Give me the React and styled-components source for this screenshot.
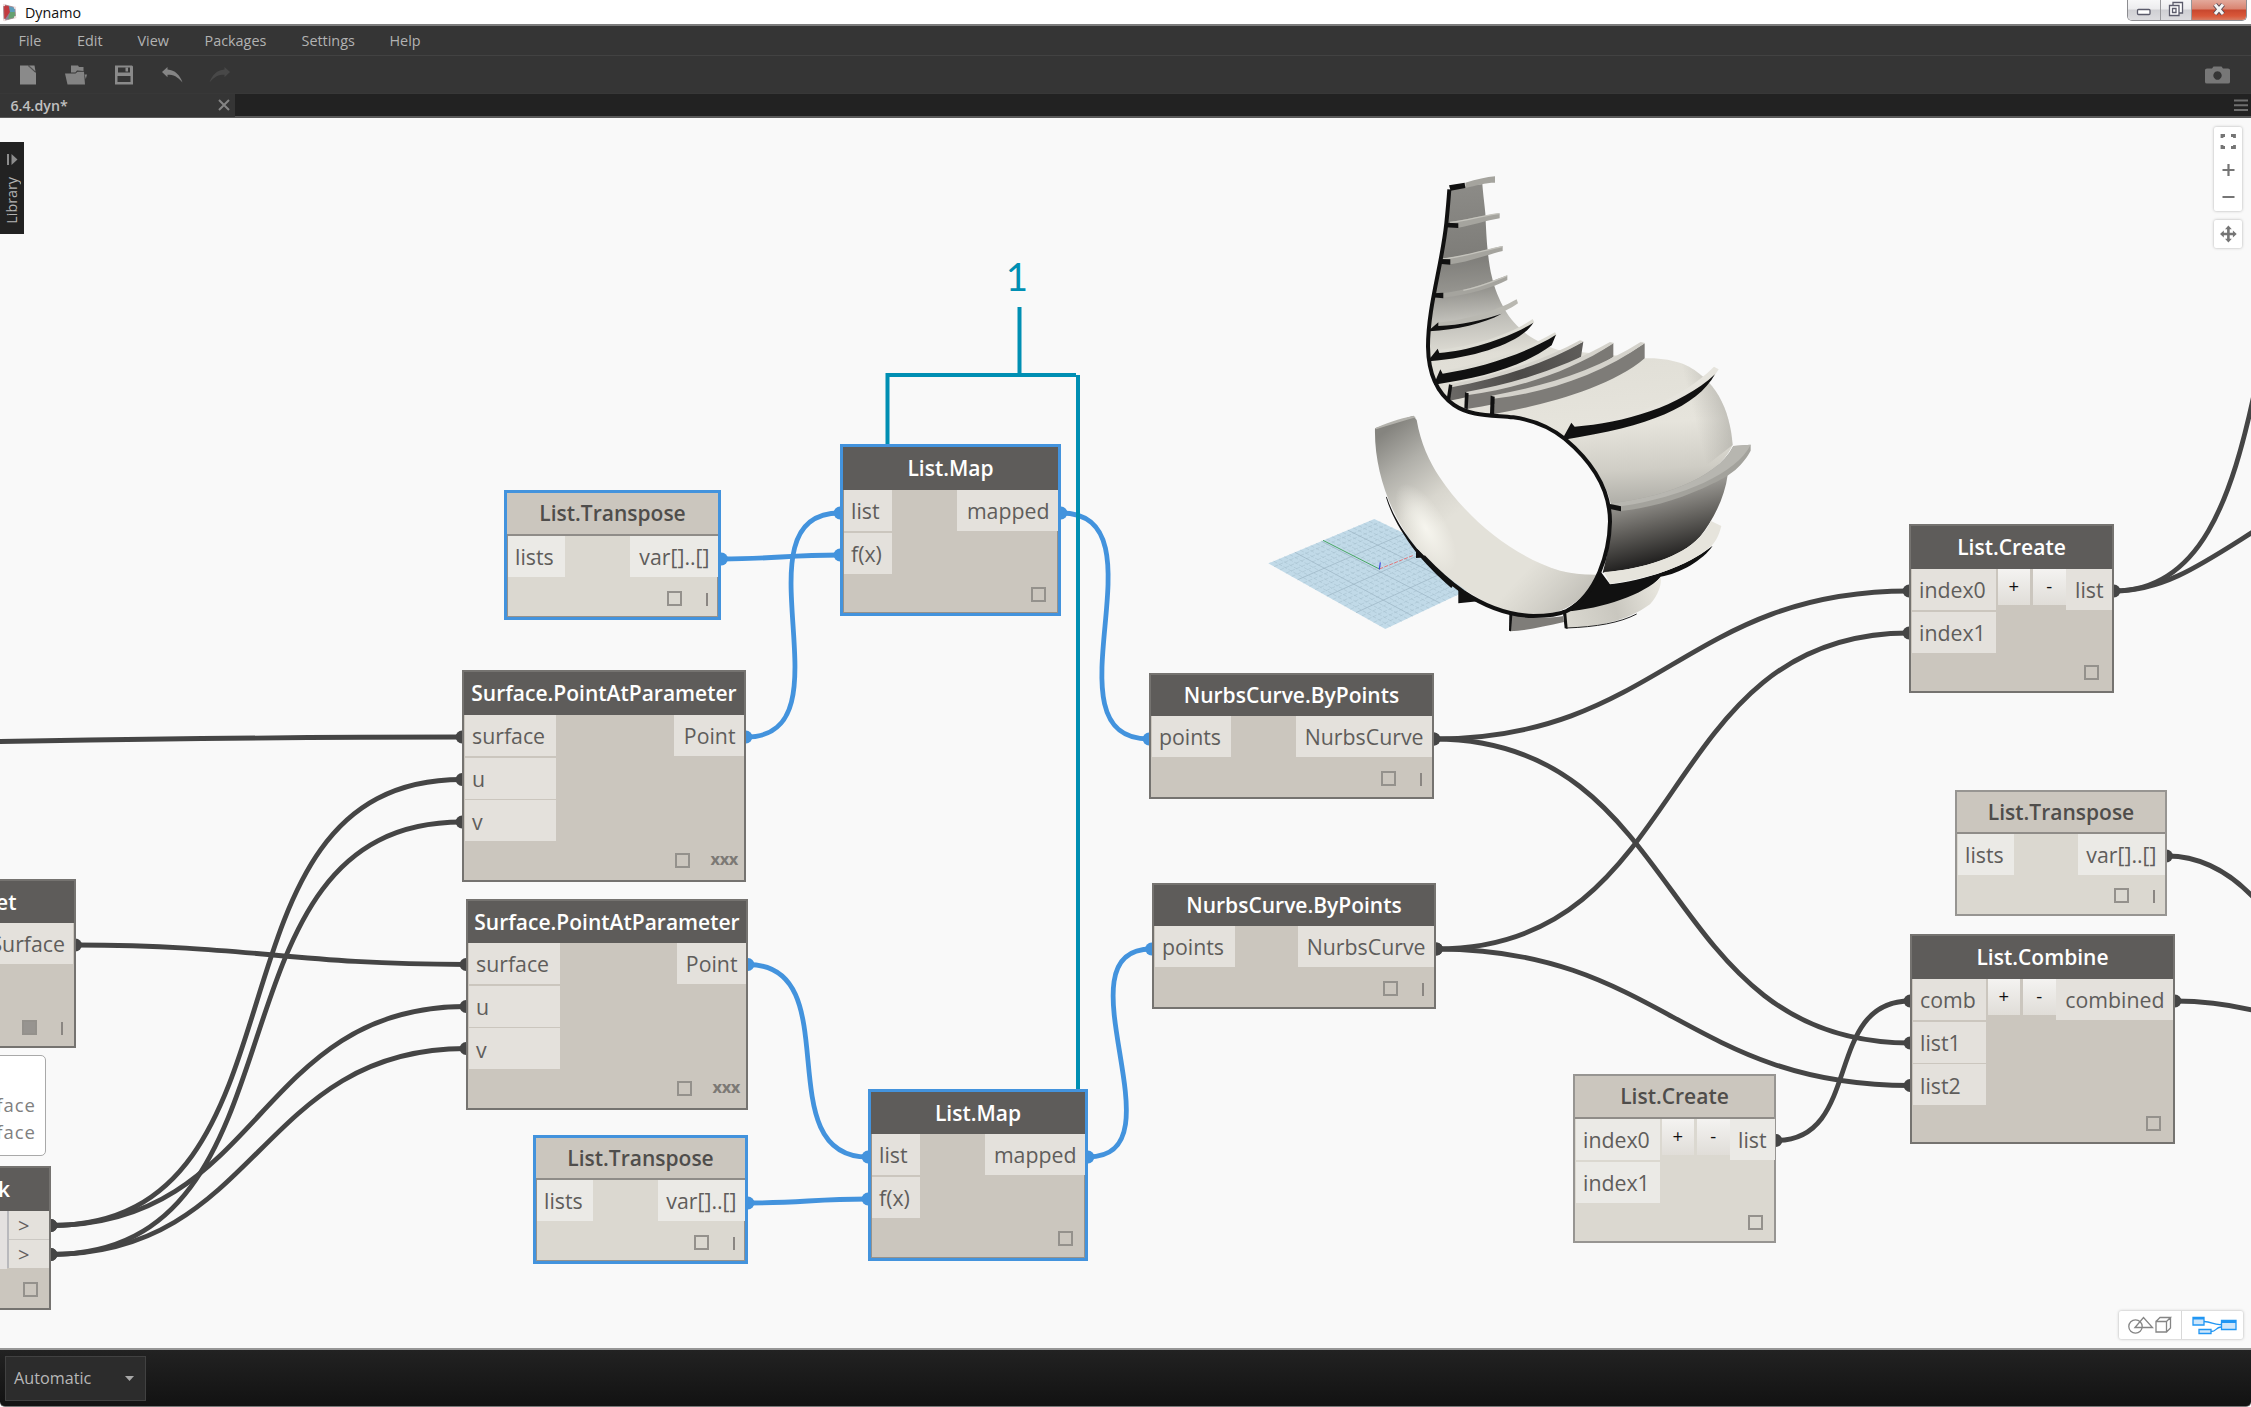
import React from "react";
import styled, { createGlobalStyle, css } from "styled-components";

const UI_FONT = '"Open Sans", "Noto Sans", sans-serif';
const DARK = "#454545";
const BLUE = "#4393dd";
const TEAL = "#008fb3";

const GlobalStyle = createGlobalStyle`
  html, body { margin: 0; padding: 0; }
  body { width: 2251px; height: 1407px; overflow: hidden; background: #fff; font-family: ${UI_FONT}; }
  *, *::before, *::after { box-sizing: border-box; }
  button { font: inherit; }
`;

/* ---------- window chrome ---------- */

const Window = styled.div`
  display: flex;
  flex-direction: column;
  width: 2251px;
  height: 1407px;
  overflow: hidden;
`;

const TitleBar = styled.header`
  display: flex;
  align-items: flex-start;
  justify-content: space-between;
  height: 24px;
  flex: none;
  background: #fff;
`;

const AppName = styled.div`
  display: flex;
  align-items: center;
  gap: 8px;
  height: 25px;
  padding-left: 2px;
  font-size: 14.3px;
  color: #111;
  svg { display: block; }
`;

const WindowButtons = styled.div`
  display: flex;
  height: 21px;
  margin-right: 4px;
  border: 1px solid #8c8c90;
  border-top: 0;
  border-radius: 0 0 5px 5px;
  overflow: hidden;
`;

const WindowButton = styled.div`
  display: flex;
  align-items: center;
  justify-content: center;
  width: ${(p) => p.$w}px;
  border-left: ${(p) => (p.$first ? "0" : "1px solid #97979b")};
  background: ${(p) =>
    p.$close
      ? "linear-gradient(#e3a99b 0%, #d98471 45%, #c8472e 50%, #d9583a 80%, #d67b62 100%)"
      : "linear-gradient(#f7f7f8 0%, #ececee 45%, #cfcfd3 50%, #dcdcdf 100%)"};
`;

const MenuBar = styled.nav`
  display: flex;
  align-items: center;
  height: 32px;
  flex: none;
  border-top: 2px solid #7c7c7c;
  border-bottom: 1px solid #424242;
  background: #353535;
`;

const MenuItem = styled.span`
  width: ${(p) => p.$w}px;
  font-size: 14.4px;
  line-height: 29px;
  color: #b2b2b2;
  &:first-child { margin-left: 18.5px; }
`;

const ToolBar = styled.div`
  display: flex;
  align-items: center;
  justify-content: space-between;
  height: 37px;
  flex: none;
  padding: 0 21px 0 19px;
  background: #353535;
`;

const Tools = styled.div`
  display: flex;
  align-items: center;
  svg { display: block; }
`;

const Tool = styled.span`
  width: ${(p) => p.$w}px;
`;

const TabStrip = styled.div`
  display: flex;
  align-items: center;
  justify-content: space-between;
  height: 25px;
  flex: none;
  padding-right: 3px;
  border-top: 1px solid #383838;
  border-bottom: 2px solid #5a5a5a;
  background: #222;
`;

const Tab = styled.div`
  display: flex;
  align-items: center;
  justify-content: space-between;
  width: 235px;
  height: 23px;
  padding: 0 5px 0 10.5px;
  background: #353535;
  font-size: 14.2px;
  font-weight: 600;
  color: #c0c0c0;
`;

/* ---------- canvas ---------- */

const Canvas = styled.main`
  position: relative;
  flex: 1;
  background: #f9f9f9;
  overflow: hidden;
`;

const Board = styled.div`
  position: absolute;
  left: 0;
  top: -118px;
  width: 2251px;
  height: 1407px;
`;

const Layer = styled.svg`
  position: absolute;
  left: ${(p) => p.$x || 0}px;
  top: ${(p) => p.$y || 0}px;
  display: block;
  pointer-events: none;
`;

const NodeBox = styled.section`
  position: absolute;
  left: ${(p) => p.$x}px;
  top: ${(p) => p.$y}px;
  display: flex;
  flex-direction: column;
  width: ${(p) => p.$w}px;
  height: ${(p) => p.$h}px;
  border: 2px solid ${(p) => (p.$frozen ? "#979592" : "#757370")};
  background: ${(p) => (p.$frozen ? "#dbd8d0" : "#cbc6be")};
  ${(p) =>
    p.$selected &&
    css`
      border: 3px solid ${BLUE};
      box-shadow: inset 0 0 0 1px #96928c;
    `}
`;

const NodeTitle = styled.h2`
  flex: none;
  display: flex;
  align-items: center;
  justify-content: center;
  height: ${(p) => p.$h}px;
  margin: 0;
  padding-top: 0.5px;
  border-bottom: ${(p) => (p.$frozen ? "2px solid #8f8c88" : "0")};
  background: ${(p) => (p.$frozen ? "#cbc6be" : "#5e5c5a")};
  color: ${(p) => (p.$frozen ? "#4f4d4b" : "#fff")};
  font-size: 21px;
  font-weight: 600;
  line-height: 1;
  white-space: nowrap;
`;

const PortArea = styled.div`
  display: flex;
  align-items: flex-start;
  padding: 0 0.5px;
`;

const PortColumn = styled.div`
  display: flex;
  flex-direction: column;
  gap: 1.6px;
  width: ${(p) => p.$w}px;
  flex: none;
  margin-left: ${(p) => (p.$end ? "auto" : "0")};
`;

const Port = styled.div`
  display: flex;
  align-items: center;
  justify-content: ${(p) => (p.$end ? "flex-end" : "flex-start")};
  height: 41px;
  padding: 1px ${(p) => (p.$end ? 8 : 0)}px 0 ${(p) => (p.$end ? 0 : 7.5)}px;
  background: ${(p) => (p.$frozen ? "#ebeae6" : "#e4e1dc")};
  color: #5f5d5b;
  font-size: 21.3px;
  line-height: 1;
  white-space: nowrap;
`;

const Steppers = styled.div`
  display: flex;
  gap: 3px;
  margin-left: 2px;
`;

const Stepper = styled.button`
  width: 32.5px;
  height: 35.5px;
  padding: 0 0 1px;
  border: 0;
  background: linear-gradient(#f4f3f1, #e0ddd8);
  color: #111;
  font-size: 18.5px;
  line-height: 1;
`;

const NodeFooter = styled.footer`
  display: flex;
  align-items: center;
  justify-content: flex-end;
  gap: ${(p) => p.$gap}px;
  margin-top: auto;
  height: 15px;
  margin-bottom: ${(p) => p.$mb}px;
  padding-right: ${(p) => p.$pr}px;
  color: #7c7975;
  font-size: 16.5px;
  font-weight: 700;
  line-height: 15px;
`;

const PreviewToggle = styled.i`
  width: 15px;
  height: 15px;
  border: 2px solid #94918c;
  background: ${(p) => (p.$on ? "#979490" : "transparent")};
`;

const Lacing = styled.span`
  height: 17px;
  line-height: 14px;
  letter-spacing: -0.4px;
`;

const LacingBar = styled.i`
  width: 2px;
  height: 13px;
  margin-top: 2px;
  background: #8a8682;
`;

const Watch = styled.div`
  position: absolute;
  left: -120px;
  top: 1055px;
  display: flex;
  flex-direction: column;
  align-items: flex-end;
  width: 166px;
  height: 101px;
  padding: 35px 9px 0 0;
  border: 1.5px solid #a9a9a9;
  border-radius: 5px;
  background: #fff;
  color: #808080;
  font-size: 18.5px;
  line-height: 27px;
  letter-spacing: 1px;
`;

const CodeOut = styled.div`
  display: flex;
  flex-direction: column;
  width: 42px;
  margin-left: auto;
  gap: 1px;
  border-left: 2px solid #b9b9bd;
  background: #cbc8c3;
`;

const CodeIn = styled.div`
  flex: 1;
  height: 57.5px;
  background: #e4e1e0;
`;

const CodePort = styled.div`
  height: 28.2px;
  padding: 1px 0 0 9.5px;
  background: #e4e1dc;
  color: #62605e;
  font-size: 20px;
  line-height: 28px;
`;

const TitleTail = styled.span`
  margin-left: auto;
  margin-right: ${(p) => p.$r}px;
`;

const Library = styled.aside`
  position: absolute;
  left: 0;
  top: 24px;
  display: flex;
  flex-direction: column;
  align-items: center;
  gap: 11px;
  width: 24px;
  height: 92px;
  padding-top: 12px;
  background: #222;
  color: #b4b4b4;
  font-size: 14.3px;
  svg { display: block; }
`;

const LibraryLabel = styled.span`
  writing-mode: vertical-rl;
  transform: rotate(180deg);
  line-height: 24px;
`;

const ViewTools = styled.div`
  position: absolute;
  right: 9px;
  top: 9px;
  display: flex;
  flex-direction: column;
  gap: 9px;
`;

const ToolCard = styled.div`
  display: flex;
  flex-direction: column;
  width: 28px;
  border-radius: 2px;
  background: #fff;
  box-shadow: 0 0 3px rgba(0, 0, 0, 0.3);
  svg { display: block; }
`;

const ModeSwitch = styled.div`
  position: absolute;
  right: 8px;
  bottom: 9px;
  display: flex;
  height: 28px;
  border-radius: 2px;
  background: #fff;
  box-shadow: 0 0 3px rgba(0, 0, 0, 0.3);
`;

const Mode = styled.span`
  width: 62px;
  height: 28px;
  & + & { border-left: 1px solid #d8d8d8; }
  svg { display: block; }
`;

const CalloutNumber = styled.div`
  position: absolute;
  left: 1001px;
  top: 251px;
  width: 32px;
  text-align: center;
  color: ${TEAL};
  font-family: Lato, sans-serif;
  font-size: 38.5px;
  line-height: 50px;
`;

const StatusBar = styled.footer`
  display: flex;
  align-items: flex-start;
  height: 59px;
  flex: none;
  padding: 6px 5px 0;
  border-top: 2px solid #979797;
  border-bottom: 1px solid #777;
  border-radius: 0 0 5px 5px;
  background: linear-gradient(#222, #121212);
`;

const RunMode = styled.div`
  display: flex;
  align-items: center;
  justify-content: space-between;
  width: 141px;
  height: 45px;
  padding: 0 11px 1px 8px;
  border: 1px solid #414141;
  background: #2c2c2c;
  color: #b8b8b8;
  font-size: 16.2px;
`;

/* ---------- node component ---------- */

function Node({ x, y, w, h, th, title, ins = [], outs = [], inW, outW, frozen, selected, steps, lacing, mb = 12, pr = 12 }) {
  return (
    <NodeBox $x={x} $y={y} $w={w} $h={h} $frozen={frozen} $selected={selected}>
      <NodeTitle $h={th} $frozen={frozen}>{title}</NodeTitle>
      <PortArea>
        <PortColumn $w={inW}>
          {ins.map((t) => <Port key={t} $frozen={frozen}>{t}</Port>)}
        </PortColumn>
        {steps && (
          <Steppers>
            <Stepper>+</Stepper>
            <Stepper>-</Stepper>
          </Steppers>
        )}
        <PortColumn $w={outW} $end>
          {outs.map((t) => <Port key={t} $end $frozen={frozen}>{t}</Port>)}
        </PortColumn>
      </PortArea>
      <NodeFooter $gap={lacing === "xxx" ? 21 : 24} $mb={mb} $pr={lacing === "xxx" ? 6 : lacing ? 10 : pr}>
        <PreviewToggle />
        {lacing === "xxx" && <Lacing>xxx</Lacing>}
        {lacing === "l" && <LacingBar />}
      </NodeFooter>
    </NodeBox>
  );
}

const NODES = [
  { x: 504, y: 490, w: 217, h: 130, th: 43, title: "List.Transpose", ins: ["lists"], outs: ["var[]..[]"], inW: 57, outW: 88, frozen: true, selected: true, lacing: "l", mb: 11 },
  { x: 840, y: 444, w: 221, h: 172, th: 43, title: "List.Map", ins: ["list", "f(x)"], outs: ["mapped"], inW: 48, outW: 101, selected: true, mb: 11 },
  { x: 462, y: 670, w: 284, h: 212, th: 43, title: "Surface.PointAtParameter", ins: ["surface", "u", "v"], outs: ["Point"], inW: 91, outW: 70, lacing: "xxx" },
  { x: 466, y: 899, w: 282, h: 211, th: 42, title: "Surface.PointAtParameter", ins: ["surface", "u", "v"], outs: ["Point"], inW: 91, outW: 69, lacing: "xxx" },
  { x: 533, y: 1135, w: 215, h: 129, th: 42, title: "List.Transpose", ins: ["lists"], outs: ["var[]..[]"], inW: 56, outW: 87, frozen: true, selected: true, lacing: "l", mb: 11 },
  { x: 868, y: 1089, w: 220, h: 172, th: 42, title: "List.Map", ins: ["list", "f(x)"], outs: ["mapped"], inW: 48, outW: 100, selected: true, mb: 12 },
  { x: 1149, y: 673, w: 285, h: 126, th: 41, title: "NurbsCurve.ByPoints", ins: ["points"], outs: ["NurbsCurve"], inW: 79, outW: 136, lacing: "l", mb: 11 },
  { x: 1152, y: 883, w: 284, h: 126, th: 41, title: "NurbsCurve.ByPoints", ins: ["points"], outs: ["NurbsCurve"], inW: 80, outW: 136, lacing: "l", mb: 11 },
  { x: 1909, y: 524, w: 205, h: 169, th: 43, title: "List.Create", ins: ["index0", "index1"], outs: ["list"], inW: 84, outW: 46, steps: true, mb: 11, pr: 13 },
  { x: 1955, y: 790, w: 212, h: 126, th: 42, title: "List.Transpose", ins: ["lists"], outs: ["var[]..[]"], inW: 56.5, outW: 87, frozen: true, lacing: "l", mb: 11 },
  { x: 1910, y: 934, w: 265, h: 210, th: 43, title: "List.Combine", ins: ["comb", "list1", "list2"], outs: ["combined"], inW: 73, outW: 117, steps: true, mb: 11 },
  { x: 1573, y: 1074, w: 203, h: 169, th: 43, title: "List.Create", ins: ["index0", "index1"], outs: ["list"], inW: 84, outW: 45, frozen: true, steps: true, mb: 11, pr: 11 },
];

/* ---------- wires ---------- */

const WIRES = [
  [-400, 745, 462, 737],
  [75.5, 945, 466, 964.5],
  [51, 1225.5, 462, 779.5],
  [51, 1225.5, 466, 1006.5],
  [51, 1254.5, 462, 822],
  [51, 1254.5, 466, 1048.5],
  [721.5, 559, 840, 555, 1],
  [746, 737, 840, 513, 1],
  [1061, 513, 1149, 739, 1],
  [748, 964.5, 868, 1157, 1],
  [748, 1203, 868, 1199, 1],
  [1088, 1157, 1151.5, 949, 1],
  [1434, 739, 1909, 591],
  [1434, 739, 1910, 1043],
  [1436.5, 949, 1909, 633],
  [1436.5, 949, 1910, 1085.5],
  [1776, 1140.5, 1910, 1001],
];

const LOOSE_WIRES = [
  "M2114 591C2200 591 2232 500 2256 385",
  "M2114 591C2165 591 2205 562 2256 530",
  "M2167 856C2200 856 2230 872 2256 900",
  "M2175 1001C2200 1001 2228 1004 2256 1011",
];

const LOOSE_PORTS = [[2114, 591], [2166.5, 856], [2175, 1001]];

const wirePath = ([x1, y1, x2, y2]) => {
  const d = Math.hypot(x2 - x1, y2 - y1) * 0.45;
  return `M${x1} ${y1}C${x1 + d} ${y1} ${x2 - d} ${y2} ${x2} ${y2}`;
};

function Wires() {
  return (
    <Layer width="2251" height="1407" fill="none" strokeWidth="4.8">
      {WIRES.map((w, i) => <path key={i} d={wirePath(w)} stroke={w[4] ? BLUE : DARK} />)}
      {LOOSE_WIRES.map((d) => <path key={d} d={d} stroke={DARK} />)}
      {WIRES.map((w, i) => (
        <g key={i} fill={w[4] ? BLUE : DARK} stroke="none">
          <circle cx={w[0]} cy={w[1]} r="6.4" />
          <circle cx={w[2]} cy={w[3]} r="6.4" />
        </g>
      ))}
      {LOOSE_PORTS.map(([cx, cy]) => <circle key={cx} cx={cx} cy={cy} r="6.4" fill={DARK} stroke="none" />)}
    </Layer>
  );
}

/* ---------- geometry preview ---------- */

const GRID = { a: [55, 1210], b: [373, 1077], c: [735, 1252], d: [406, 1407] };
const mix = (p, q, t) => [p[0] + (q[0] - p[0]) * t, p[1] + (q[1] - p[1]) * t];

function gridLines() {
  const out = [];
  const n = 20;
  for (let i = 1; i < n; i++) {
    const t = i / n;
    out.push([mix(GRID.a, GRID.b, t), mix(GRID.d, GRID.c, t), i % 5 === 0]);
    out.push([mix(GRID.a, GRID.d, t), mix(GRID.b, GRID.c, t), i % 5 === 0]);
  }
  return out;
}

function Chair() {
  return (
    <Layer $x={1250} $y={160} width="520" height="490" viewBox="0 0 1560 1470">
      <defs>
        <linearGradient id="back" gradientUnits="userSpaceOnUse" x1="900" y1="75" x2="960" y2="1060">
          <stop offset="0" stopColor="#8b8a86" />
          <stop offset=".2" stopColor="#7e7d79" />
          <stop offset=".3" stopColor="#94938e" />
          <stop offset=".39" stopColor="#bfbeb8" />
          <stop offset=".5" stopColor="#e0ded6" />
          <stop offset=".74" stopColor="#e6e4dc" />
          <stop offset=".88" stopColor="#cfcdc5" />
          <stop offset="1" stopColor="#a9a8a2" />
        </linearGradient>
        <linearGradient id="rim" gradientUnits="userSpaceOnUse" x1="1340" y1="800" x2="1460" y2="770">
          <stop offset="0" stopColor="#8f8e88" stopOpacity="0" />
          <stop offset="1" stopColor="#8f8e88" stopOpacity=".5" />
        </linearGradient>
        <linearGradient id="belly" gradientUnits="userSpaceOnUse" x1="1220" y1="1000" x2="1265" y2="1190">
          <stop offset="0" stopColor="#9a9893" />
          <stop offset=".45" stopColor="#65635f" />
          <stop offset="1" stopColor="#242322" />
        </linearGradient>
        <linearGradient id="arm" gradientUnits="userSpaceOnUse" x1="385" y1="830" x2="580" y2="1090">
          <stop offset="0" stopColor="#85847f" />
          <stop offset=".35" stopColor="#b0afa9" />
          <stop offset=".75" stopColor="#d8d6ce" />
          <stop offset="1" stopColor="#e3e1d9" />
        </linearGradient>
        <radialGradient id="shine" gradientUnits="userSpaceOnUse" cx="0" cy="0" r="1" gradientTransform="translate(528 1105) rotate(60) scale(150 62)">
          <stop offset="0" stopColor="#f6f5ee" />
          <stop offset="1" stopColor="#f6f5ee" stopOpacity="0" />
        </radialGradient>
        <linearGradient id="armEnd" gradientUnits="userSpaceOnUse" x1="820" y1="1240" x2="970" y2="1380">
          <stop offset="0" stopColor="#c5c3bb" stopOpacity="0" />
          <stop offset="1" stopColor="#bdbbb4" />
        </linearGradient>
        <linearGradient id="fin8" gradientUnits="userSpaceOnUse" x1="600" y1="700" x2="1000" y2="570">
          <stop offset="0" stopColor="#6b6966" />
          <stop offset=".5" stopColor="#4c4a48" />
          <stop offset="1" stopColor="#5f5d5a" />
        </linearGradient>
        <linearGradient id="foot" gradientUnits="userSpaceOnUse" x1="950" y1="1370" x2="1230" y2="1280">
          <stop offset="0" stopColor="#d9d7cf" />
          <stop offset=".5" stopColor="#c9c7bf" />
          <stop offset="1" stopColor="#e9e7df" />
        </linearGradient>
        <clipPath id="armClip">
          <path d="M375 805L490 767L500 780C512 850 538 905 568 950C650 1075 790 1190 930 1232Q985 1246 1045 1244C1010 1320 930 1368 850 1368C740 1362 620 1290 500 1165C420 1065 372 930 375 805Z" />
        </clipPath>
      </defs>

      <path d="M55 1210L373 1077L735 1252L406 1407Z" fill="#c1dae8" />
      {gridLines().map(([p, q, major], i) => (
        <path key={i} d={`M${p}L${q}`} stroke={major ? "#94adbc" : "#a3bccb"} strokeWidth={major ? 1.8 : 1.5} strokeDasharray={major ? "none" : "12 5"} />
      ))}
      <path d="M219 1141L388 1227" stroke="#4aa765" strokeWidth="3" />
      <path d="M388 1227L490 1186" stroke="#e0787c" strokeWidth="3" strokeDasharray="12 4" />
      <path d="M388 1228L391 1207" stroke="#3c48e0" strokeWidth="3.5" />

      <path d="M602 85L697 72C700 110 704 135 706 160C708 210 710 235 712 262C716 300 719 325 726 352C733 385 748 420 765 450C785 485 820 520 862 542C880 552 900 562 925 570L1185 595C1225 593 1270 600 1300 612C1395 655 1440 745 1448 855C1400 960 1240 1020 1084 1040C1070 960 1010 890 945 835C860 775 800 770 700 765C610 745 540 690 536 560C545 400 585 250 602 85Z" fill="url(#back)" />
      <path d="M1185 595C1225 593 1270 600 1300 612C1395 655 1440 745 1448 855L1300 970L1200 700Z" fill="url(#rim)" />
      <path d="M1082 1045C1200 1030 1350 985 1433 945C1425 1010 1390 1080 1350 1130C1290 1195 1180 1225 1058 1238C1075 1180 1084 1110 1082 1045Z" fill="url(#belly)" />

      <g fill="#a5a49e">
        <path d="M646 68C680 58 710 51 735 49V68C705 68 680 76 646 84Z" />
        <path d="M598 186C650 180 700 166 749 160V175C710 181 665 197 625 203Z" />
        <path d="M575 296C640 290 710 268 758 258V273C710 285 650 307 601 313Z" />
        <path d="M578 400C670 388 730 362 772 346V360C730 382 660 405 578 413Z" />
      </g>
      <g fill="none" stroke="#c4c3bc" strokeWidth="4">
        <path d="M600 187C650 182 700 166 747 161" />
        <path d="M577 297C640 291 710 269 756 260" />
        <path d="M640 391C690 382 730 364 770 348" />
      </g>
      <path d="M565 488C650 480 740 452 800 418L804 430C760 462 680 490 565 500Z" fill="#b9b8b1" />
      <path d="M567 570C680 557 785 522 848 477L853 487C790 540 680 575 567 585Z" fill="#dddcd4" />
      <path d="M572 634C700 610 820 572 915 517L920 525C850 580 700 625 572 645Z" fill="#dddcd4" />
      <g fill="#111">
        <path d="M597 76L644 68L646 84L602 92Z" />
        <path d="M588 188L625 190V204L586 202Z" />
        <path d="M568 297L601 298V314L566 311Z" />
        <path d="M549 400L580 398V415L546 412Z" />
        <path d="M538 510L565 487V498C630 496 700 480 755 461C700 492 620 508 538 514Z" />
        <path d="M536 600L563 566L568 579C660 572 780 532 850 488C820 540 700 590 536 604Z" />
        <path d="M552 672L571 628L578 641C700 622 830 580 918 524L905 556C820 618 700 653 552 674Z" />
      </g>

      <path d="M605 675C740 650 880 608 1000 545L993 590C920 640 760 692 598 722Z" fill="url(#fin8)" />
      <path d="M655 700C800 680 960 630 1090 549V590C980 665 820 722 650 747Z" fill="#7b7975" />
      <path d="M733 712C890 690 1050 640 1184 550V595C1080 685 880 735 733 762Z" fill="#7e7c78" />
      <g fill="#d4d2cb">
        <path d="M600 673C740 645 880 602 990 541L1001 544C890 612 740 655 605 682Z" />
        <path d="M648 696C800 670 950 620 1080 546L1092 549C960 636 800 686 650 706Z" />
        <path d="M725 707C880 680 1040 630 1172 546L1185 549C1050 645 890 698 730 716Z" />
      </g>
      <g fill="#111">
        <path d="M597 673L607 676L600 724L590 718Z" />
        <path d="M645 697L656 700L653 748L643 745Z" />
        <path d="M722 707L734 710L733 766L720 762Z" />
      </g>

      <path d="M972 797C1130 780 1290 722 1392 620L1406 628C1360 710 1200 800 972 812Z" fill="#e6e4dd" />
      <path d="M940 832L964 788L974 800C1120 790 1290 740 1395 643C1340 740 1200 800 942 839Z" fill="#111" />

      <path d="M1082 1030C1220 1015 1400 960 1450 858L1502 854V872C1470 930 1430 950 1390 970C1300 1015 1200 1045 1112 1053Z" fill="#a3a29c" />
      <path d="M1082 1030C1220 1015 1400 960 1450 858L1502 854C1460 940 1300 1010 1112 1039Z" fill="#b7b6b0" />
      <path d="M1080 1032L1113 1039V1054L1080 1047Z" fill="#111" />

      <path d="M1050 1232L1080 1273C1180 1262 1310 1220 1388 1157C1360 1200 1290 1240 1232 1250C1180 1315 1060 1352 935 1356C1000 1320 1040 1270 1050 1232Z" fill="#111" />
      <path d="M1062 1236C1180 1230 1300 1185 1345 1135C1365 1115 1375 1100 1383 1083L1414 1098C1406 1130 1395 1148 1380 1162C1310 1220 1200 1255 1080 1272Z" fill="#e6e4dc" />
      <path d="M946 1356C1060 1345 1180 1305 1232 1252C1236 1270 1226 1305 1200 1333C1130 1385 1040 1400 950 1405Z" fill="url(#foot)" />
      <path d="M948 1404C1040 1401 1110 1388 1160 1362" stroke="#222" strokeWidth="3" fill="none" />
      <path d="M938 1350H948L953 1406L944 1405Z" fill="#111" />
      <path d="M782 1362C830 1375 900 1375 940 1368L942 1386C880 1400 830 1411 780 1414Z" fill="#7f7d79" />
      <path d="M778 1362L787 1365L783 1414L777 1412Z" fill="#111" />
      <path d="M498 1168H515L532 1192L498 1194Z" fill="#111" />
      <path d="M625 1288L684 1324L625 1330Z" fill="#111" />

      <path d="M375 805L490 767L500 780C512 850 538 905 568 950C650 1075 790 1190 930 1232Q985 1246 1045 1244C1010 1320 930 1368 850 1368C740 1362 620 1290 500 1165C420 1065 372 930 375 805Z" fill="url(#arm)" />
      <g clipPath="url(#armClip)">
        <rect x="370" y="900" width="400" height="400" fill="url(#shine)" />
        <rect x="700" y="1100" width="360" height="280" fill="url(#armEnd)" />
      </g>
      <path d="M375 805C400 792 450 775 490 768L498 772C460 782 420 795 378 808Z" fill="#b3b2ac" />

      <path d="M410 1010C430 1070 460 1115 500 1165C530 1200 570 1240 610 1275L604 1284C560 1246 525 1210 496 1174C455 1118 425 1068 408 1012Z" fill="#111" />
      <path d="M520 1190C560 1232 600 1268 640 1296C700 1336 770 1366 850 1368C900 1368 930 1362 950 1353C1040 1305 1078 1180 1080 1085C1080 980 1020 900 945 837C905 805 850 780 790 772C720 765 660 768 612 735C555 695 535 630 534 560C534 440 575 320 589 190Q595 130 598 88" fill="none" stroke="#111" strokeWidth="12" />
    </Layer>
  );
}

/* ---------- icons ---------- */

const DynamoIcon = () => (
  <svg width="15" height="19" viewBox="0 0 15 19">
    <path d="M1.500 1.500L13 4.500L13.500 14.500L2 17.500Z" fill="#8d7f96" />
    <path d="M1.500 1.500L7 3L8 9L2 17.500Z" fill="#c23a3f" />
    <path d="M7 3L13 4.500V9L8 9Z" fill="#5b9dbb" />
    <path d="M8 9L13.200 9L13.500 14.500L6 16.400Z" fill="#64a06f" />
    <path d="M1.500 1.500L13 4.500L13.500 14.500L2 17.500Z" fill="none" stroke="#a58c92" strokeWidth=".8" />
    <g fill="#f1dfdf">
      <circle cx="2" cy="2" r="1.2" /><circle cx="13" cy="4.700" r="1.2" />
      <circle cx="13.200" cy="14.300" r="1.2" /><circle cx="2.300" cy="17" r="1.2" />
    </g>
  </svg>
);

const NewIcon = () => (
  <svg width="18" height="20" viewBox="0 0 18 20" fill="#8a8a8a">
    <path d="M1 .5H9.500L17 7.500V19.500H1Z" />
    <path d="M10 .5H15.500L16.500 6.500Z" />
    <path d="M9 .5L16.500 7.500" fill="none" stroke="#4a4a4a" strokeWidth="1" />
  </svg>
);

const OpenIcon = () => (
  <svg width="24" height="20" viewBox="0 0 24 20" fill="#838383">
    <path d="M6 .5H13L14 2H18.500V6L12 5.500L10.500 7.500H6Z" />
    <path d="M0 8.500H10.500L12.500 6.800H19L20 19.500H2.500Z" />
    <path d="M19.500 9.500H22L20.800 14Z" />
  </svg>
);

const SaveIcon = () => (
  <svg width="18" height="20" viewBox="0 0 18 20">
    <path fillRule="evenodd" fill="#8a8a8a" d="M0 .5H17L18 1.500V19.500H0ZM3 2.500V7.500H15V2.500ZM2.500 11V17H15.500V11Z" />
    <path d="M10.500 2.500H13V6.500H10.500Z" fill="#8a8a8a" />
  </svg>
);

const UndoIcon = ({ color, flip }) => (
  <svg width="21" height="16" viewBox="0 0 21 16" fill={color}>
    <path transform={flip ? "translate(21 0) scale(-1 1)" : undefined} d="M0 5L5.500 0V2.500C13 3 18 8 20.500 15.500C15.500 9.500 11.500 7.800 5.500 7.800V10.300Z" />
  </svg>
);

const CameraIcon = () => (
  <svg width="25" height="18" viewBox="0 0 25 18">
    <path fillRule="evenodd" fill="#777" d="M2 2.500H7L8.500.500H16.500L18 2.500H23Q25 2.500 25 4V16Q25 17.500 23 17.500H2Q0 17.500 0 16V4Q0 2.500 2 2.500ZM12.500 5.300A4.200 4.200 0 1 0 12.510 5.300Z" />
  </svg>
);

const ShapesIcon = () => (
  <svg width="62" height="28" viewBox="0 0 62 28" fill="none" stroke="#858585" strokeWidth="1.3">
    <circle cx="16.500" cy="15.500" r="6.700" />
    <path d="M16 16.500L24.500 6.500L33.500 16.500Z" />
    <path d="M37 10.500H47.500V21H37ZM37 10.500L41 6.500H51.500L47.500 10.500M51.500 6.500V17L47.500 21" />
  </svg>
);

const GraphIcon = () => (
  <svg width="61" height="28" viewBox="0 0 61 28" fill="none" stroke="#2196f3" strokeWidth="1.3">
    <path d="M22 10.500C30 10.500 31 14 39 13.500M29 20.500C35 20.500 33 16.500 39 16" />
    <g fill="#cfe6fa">
      <path d="M11 6.500H22V14H11ZM39.500 9.500H54V18.500H39.500ZM17 18.500H29V22.500H17Z" />
    </g>
    <path d="M11 7.500H22M39.500 11H54" strokeWidth="2" />
  </svg>
);

const MENU = [["File", 58.5], ["Edit", 60.5], ["View", 67], ["Packages", 97], ["Settings", 88], ["Help", 60]];

export default function App() {
  return (
    <Window>
      <GlobalStyle />
      <TitleBar>
        <AppName><DynamoIcon />Dynamo</AppName>
        <WindowButtons>
          <WindowButton $w={32} $first>
            <svg width="16" height="21"><rect x="1.500" y="9.500" width="12.500" height="5" rx="1" fill="#fff" stroke="#5b5b6b" strokeWidth="1.300" /></svg>
          </WindowButton>
          <WindowButton $w={31}>
            <svg width="16" height="21" fill="#fff" stroke="#5b5b6b" strokeWidth="1.300">
              <path d="M5 2.500H14.500V13H5Z" /><path d="M1.500 5.500H11V15.500H1.500Z" /><path d="M4.500 8.500H8V12.500H4.500Z" />
            </svg>
          </WindowButton>
          <WindowButton $w={55} $close>
            <svg width="16" height="21"><g fill="none" strokeLinejoin="round"><path d="M4 4.500L12 14M12 4.500L4 14" stroke="#5b4a55" strokeWidth="5" /><path d="M4 4.500L12 14M12 4.500L4 14" stroke="#f4f4f4" strokeWidth="3" /></g></svg>
          </WindowButton>
        </WindowButtons>
      </TitleBar>

      <MenuBar>
        {MENU.map(([label, w]) => <MenuItem key={label} $w={w}>{label}</MenuItem>)}
      </MenuBar>

      <ToolBar>
        <Tools>
          <Tool $w={46}><NewIcon /></Tool>
          <Tool $w={50}><OpenIcon /></Tool>
          <Tool $w={47}><SaveIcon /></Tool>
          <Tool $w={46.5}><UndoIcon color="#858585" /></Tool>
          <Tool $w={30}><UndoIcon color="#484848" flip /></Tool>
        </Tools>
        <Tools><CameraIcon /></Tools>
      </ToolBar>

      <TabStrip>
        <Tab>
          6.4.dyn*
          <svg width="12" height="12" stroke="#858585" strokeWidth="2"><path d="M1 1L11 11M11 1L1 11" /></svg>
        </Tab>
        <svg width="14" height="13" stroke="#6f6f6f" strokeWidth="2"><path d="M0 1.500H14M0 6.300H14M0 11H14" /></svg>
      </TabStrip>

      <Canvas>
        <Board>
          <Chair />
          <Wires />

          <NodeBox $x={-120} $y={879} $w={195.5} $h={169}>
            <NodeTitle $h={42}><TitleTail $r={57}>Get</TitleTail></NodeTitle>
            <PortArea>
              <PortColumn $w={140} $end><Port $end>Surface</Port></PortColumn>
            </PortArea>
            <NodeFooter $gap={24} $mb={11} $pr={11}><PreviewToggle $on /><LacingBar /></NodeFooter>
          </NodeBox>

          <Watch><span>Surface</span><span>Surface</span></Watch>

          <NodeBox $x={-120} $y={1166} $w={171} $h={144}>
            <NodeTitle $h={43}><TitleTail $r={39}>Code Block</TitleTail></NodeTitle>
            <PortArea>
              <CodeIn />
              <CodeOut><CodePort>&gt;</CodePort><CodePort>&gt;</CodePort></CodeOut>
            </PortArea>
            <NodeFooter $gap={24} $mb={11} $pr={11}><PreviewToggle /></NodeFooter>
          </NodeBox>

          {NODES.map((n, i) => <Node key={i} {...n} />)}

          <Layer width="2251" height="1407" fill="none" stroke={TEAL} strokeWidth="4">
            <path d="M887.500 444V375H1076M1078 375V1089M1019.500 307V375" />
          </Layer>
          <CalloutNumber>1</CalloutNumber>
        </Board>

        <Library>
          <svg width="12" height="12" fill="#8c8c8c"><path d="M1 0H3V11H1ZM5.500 0L11.500 5.500L5.500 11Z" /></svg>
          <LibraryLabel>Library</LibraryLabel>
        </Library>

        <ViewTools>
          <ToolCard>
            <svg width="28" height="84" fill="none" stroke="#757575" strokeWidth="2.200">
              <path d="M8 11V8.500H11M17 8.500H20.500V11M8 18V20.500H11M17 20.500H20.500V18" strokeWidth="2.800" />
              <path d="M8.500 43H20.500M14.500 37V49M8.500 70H20.500" />
            </svg>
          </ToolCard>
          <ToolCard>
            <svg width="28" height="28" fill="#757575" stroke="none">
              <path d="M13.100 8H15.700V20H13.100ZM8 12.700H20V15.300H8Z" />
              <path d="M14.400 5.500L17.800 9.300H11ZM14.400 22.500L17.800 18.700H11ZM6 14L9.800 10.600V17.400ZM22.700 14L18.900 10.600V17.400Z" />
            </svg>
          </ToolCard>
        </ViewTools>

        <ModeSwitch>
          <Mode><ShapesIcon /></Mode>
          <Mode><GraphIcon /></Mode>
        </ModeSwitch>
      </Canvas>

      <StatusBar>
        <RunMode>
          Automatic
          <svg width="9" height="5" fill="#a8a8a8"><path d="M0 0H9L4.500 5Z" /></svg>
        </RunMode>
      </StatusBar>
    </Window>
  );
}
